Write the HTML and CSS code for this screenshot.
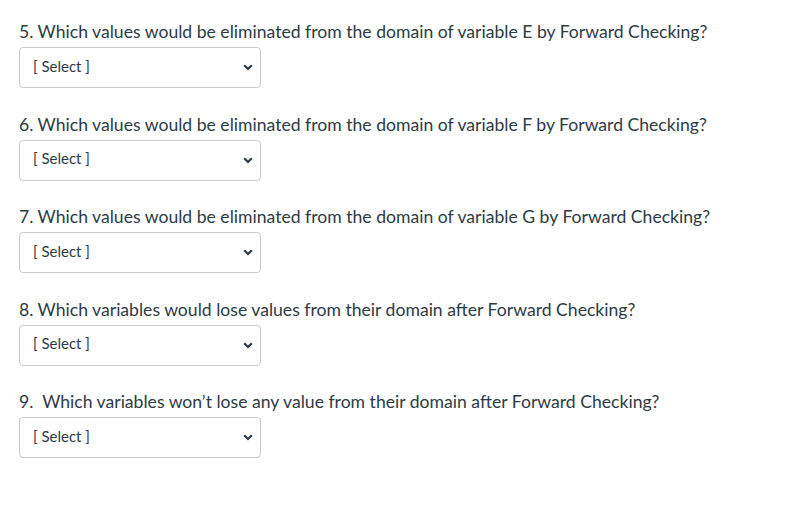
FILE: index.html
```html
<!DOCTYPE html>
<html lang="en">
<head>
    <meta charset="UTF-8">
    <title>Quiz</title>
    <link rel="stylesheet" href="styles.css">
</head>
<body>
<div class="quiz">
    <div class="question">
        <p class="text">5. Which values would be eliminated from the domain of variable E by Forward Checking?</p>
        <div class="select"><span>[ Select ]</span><svg class="arrow" width="10" height="7" viewBox="0 0 10 7"><path d="M1.2 1.2 L5 5 L8.8 1.2" fill="none" stroke="#2d3b45" stroke-width="2.2"/></svg></div>
    </div>
    <div class="question">
        <p class="text">6. Which values would be eliminated from the domain of variable F by Forward Checking?</p>
        <div class="select"><span>[ Select ]</span><svg class="arrow" width="10" height="7" viewBox="0 0 10 7"><path d="M1.2 1.2 L5 5 L8.8 1.2" fill="none" stroke="#2d3b45" stroke-width="2.2"/></svg></div>
    </div>
    <div class="question">
        <p class="text">7. Which values would be eliminated from the domain of variable G by Forward Checking?</p>
        <div class="select"><span>[ Select ]</span><svg class="arrow" width="10" height="7" viewBox="0 0 10 7"><path d="M1.2 1.2 L5 5 L8.8 1.2" fill="none" stroke="#2d3b45" stroke-width="2.2"/></svg></div>
    </div>
    <div class="question">
        <p class="text">8. Which variables would lose values from their domain after Forward Checking?</p>
        <div class="select"><span>[ Select ]</span><svg class="arrow" width="10" height="7" viewBox="0 0 10 7"><path d="M1.2 1.2 L5 5 L8.8 1.2" fill="none" stroke="#2d3b45" stroke-width="2.2"/></svg></div>
    </div>
    <div class="question">
        <p class="text">9.&nbsp; Which variables won’t lose any value from their domain after Forward Checking?</p>
        <div class="select"><span>[ Select ]</span><svg class="arrow" width="10" height="7" viewBox="0 0 10 7"><path d="M1.2 1.2 L5 5 L8.8 1.2" fill="none" stroke="#2d3b45" stroke-width="2.2"/></svg></div>
    </div>
</div>
</body>
</html>
```

FILE: styles.css
```css
*{
    margin: 0;
    padding: 0;
    box-sizing: border-box;
}
body{
    background: #ffffff;
    font-family: Lato, "Liberation Sans", sans-serif;
    color: #2d3b45;
}
.quiz{
    padding: 19px 0 0 19px;
    display: flex;
    flex-direction: column;
    gap: 23.5px;
}
.question .text{
    font-size: 17.6px;
    line-height: 26px;
    margin-bottom: 2px;
}
.select{
    width: 242px;
    height: 41px;
    border: 1px solid #c7cdd1;
    border-radius: 4px;
    display: flex;
    align-items: center;
    justify-content: space-between;
    padding: 0 7px 0 13px;
    font-size: 15px;
    color: #2d3b45;
}
.select span{
    margin-top: -4px;
}
.arrow{
    display: block;
}
```
